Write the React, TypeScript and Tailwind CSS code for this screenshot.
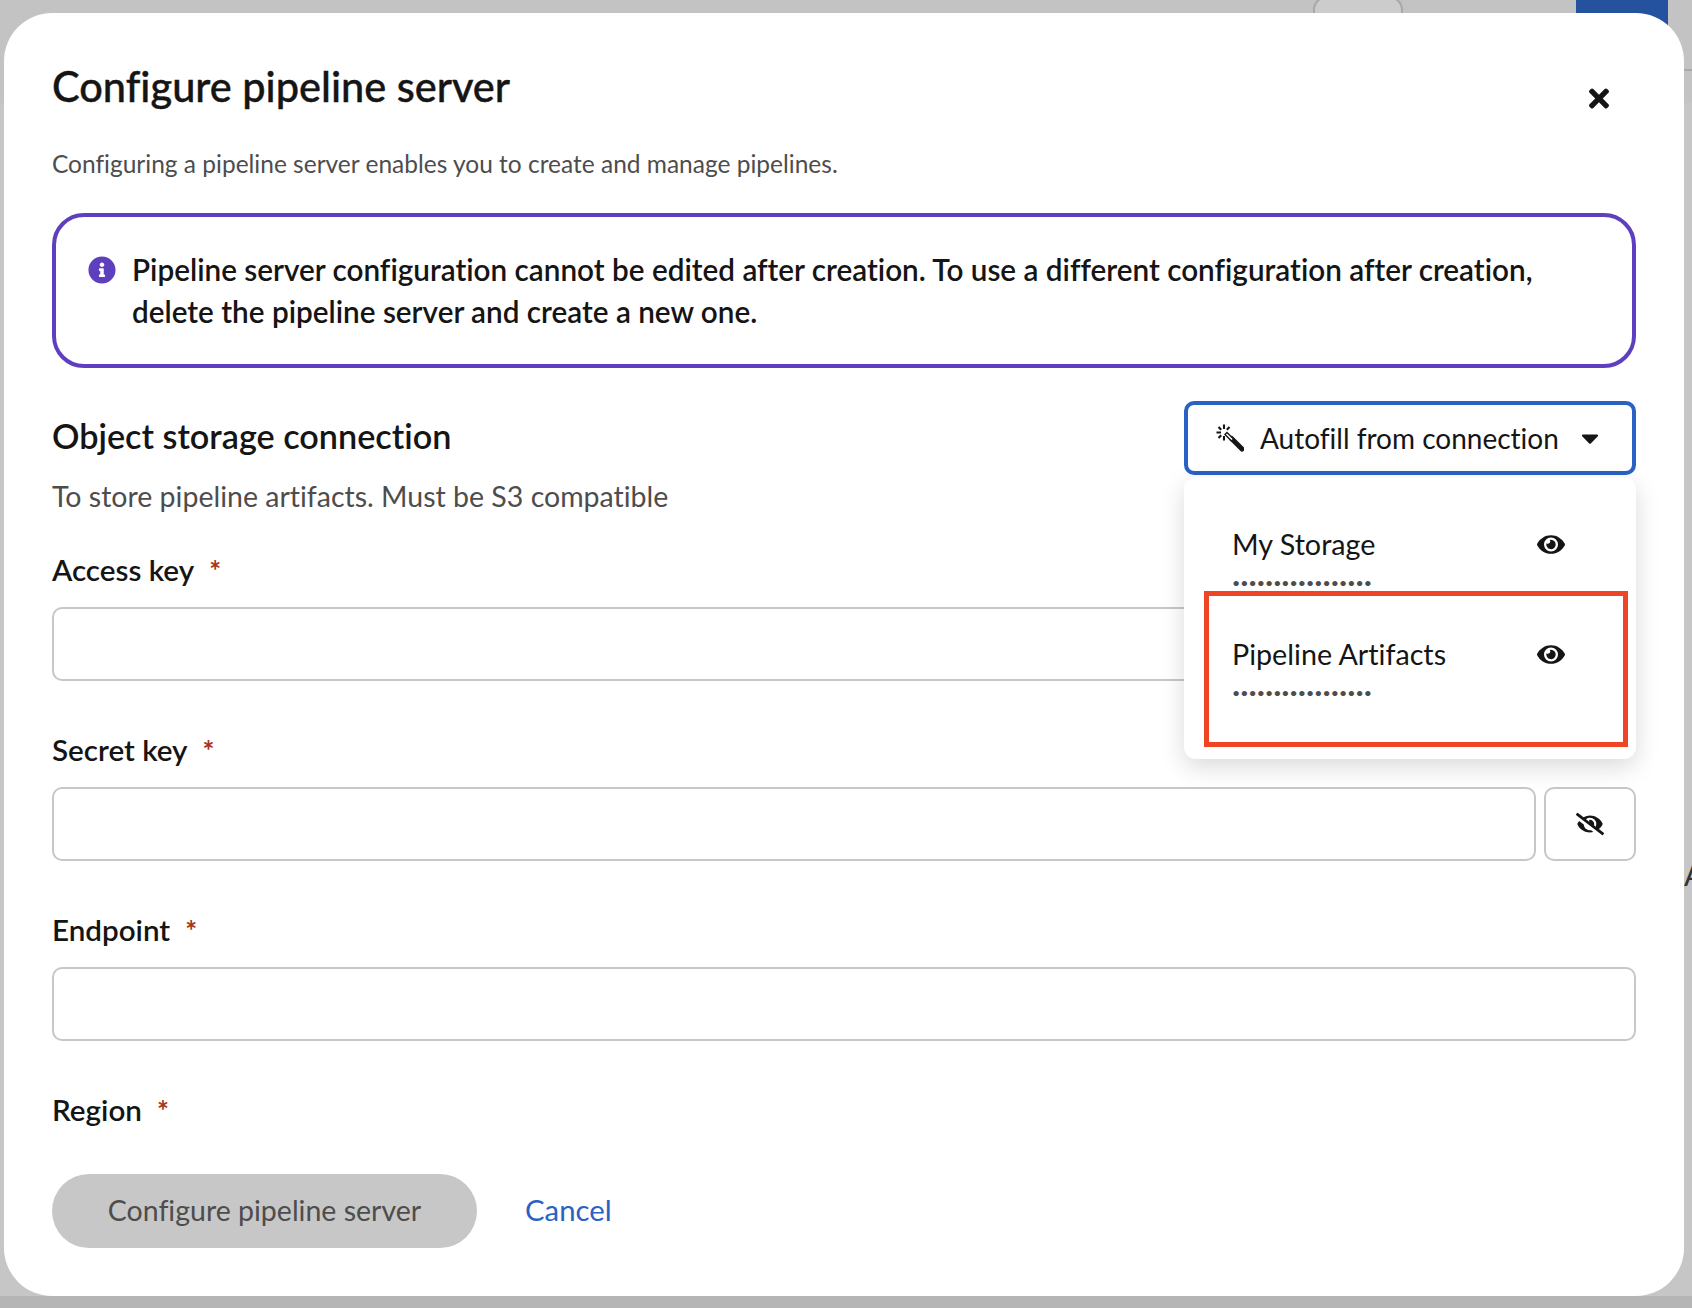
import { FaCaretDown, FaEye, FaEyeSlash, FaInfoCircle, FaTimes } from "react-icons/fa";

const Label = ({ text }: { text: string }) => (
  <div className="flex h-9 items-center text-[29.6px] font-semibold leading-9 text-[#151515]">
    <span>{text}</span>
    <span className="ml-[15px] text-[28px] font-bold text-[#a3361a]">*</span>
  </div>
);

const Input = ({ button = false }: { button?: boolean }) => (
  <div className="mt-[19px] flex h-[74px] gap-2">
    <div className="flex-1 rounded-[10px] border-2 border-[#c7c7c7] bg-white" />
    {button && (
      <button className="flex w-[92px] items-center justify-center rounded-[10px] border-2 border-[#c7c7c7] bg-white text-[#151515]">
        <FaEyeSlash className="h-[26px] w-[28px]" />
      </button>
    )}
  </div>
);

const MenuItem = ({ name }: { name: string }) => (
  <div className="h-[110px] pl-12 pr-[71px] pt-[19px]">
    <div className="flex h-9 items-center justify-between">
      <span className="text-[28.7px] leading-9 text-[#151515]">{name}</span>
      <FaEye className="h-[25px] w-[28px] text-[#151515]" />
    </div>
    <div className="mt-[5px] text-[14.2px] leading-8 text-[#4d4d4d]">•••••••••••••••••</div>
  </div>
);

// the wand with a burst at its tip, no icon in the packages has this shape
const Wand = () => (
  <svg viewBox="0 0 28 28" className="h-7 w-7 shrink-0" fill="none" stroke="#151515">
    <path d="M15.5 14.5 L26 25" strokeWidth="5" strokeLinecap="round" />
    <path d="M9 10.5 L11 8.5 L17.5 15 L15.5 17 Z" strokeWidth="1.4" fill="#ffffff" />
    <path d="M8 0.5 V5 M0.5 8.5 H5 M2.5 3 L5.2 5.7 M13.5 3 L10.8 5.7 M2.5 14 L5.2 11.3 M8 12 V16.5" strokeWidth="2.1" />
  </svg>
);

export default function App() {
  return (
    <div className="relative h-[1308px] w-[1692px] overflow-hidden bg-[#c6c6c6] font-['Lato',sans-serif] [font-variant-ligatures:none]">
      {/* dimmed page behind the modal */}
      <div className="absolute left-0 top-0 h-[103px] w-full bg-[#c3c3c3]" />
      <div className="absolute left-[1313px] top-[-4px] h-[60px] w-[90px] rounded-[14px] border-2 border-[#a8a8a8] bg-[#cccccc]" />
      <div className="absolute left-[1576px] top-0 h-[60px] w-[92px] bg-[#24529f]" />
      <div className="absolute left-[1684px] top-[69px] h-[2px] w-2 bg-[#a9a9a9]" />
      <div className="absolute bottom-0 left-0 h-3 w-full bg-[#b5b5b5]" />
      <div className="absolute left-[1684px] top-[856px] text-[30px] leading-9 text-[#333333]">A</div>

      <div className="absolute left-1 top-[13px] h-[1283px] w-[1680px] rounded-[48px] bg-white px-12 pt-12">
        <div className="flex items-start justify-between">
          <h1 className="pb-[2px] text-[41.5px] font-medium leading-[50px] text-[#151515] [-webkit-text-stroke:0.4px_#151515]">Configure pipeline server</h1>
          <FaTimes className="mr-[27px] mt-[23px] h-[29px] w-[20px] text-[#151515]" />
        </div>
        <p className="mt-[35px] text-[24.5px] leading-8 text-[#4d4d4d]">
          Configuring a pipeline server enables you to create and manage pipelines.
        </p>

        <div className="mt-[33px] flex h-[155px] gap-4 rounded-[32px] border-4 border-[#5e40be] pl-8 pt-8">
          <FaInfoCircle className="mt-[7px] h-7 w-7 shrink-0 text-[#5e40be]" />
          <p className="w-[1440px] text-[29.7px] font-semibold leading-[42px] text-[#151515]">
            Pipeline server configuration cannot be edited after creation. To use a different configuration after creation,
            <br />
            delete the pipeline server and create a new one.
          </p>
        </div>

        <div className="mt-[33px] flex h-[74px] items-center justify-between">
          <h2 className="pb-1 text-[34.2px] font-semibold leading-10 text-[#151515]">Object storage connection</h2>
          <div className="relative z-10 w-[452px]">
            <button className="flex h-[74px] w-full items-center rounded-[10px] border-4 border-[#2a62c4] bg-white pl-[28px] text-[#151515]">
              <Wand />
              <span className="ml-4 pb-[1px] text-[28px] leading-9">Autofill from connection</span>
              <FaCaretDown className="ml-[22px] h-[28px] w-[18px]" />
            </button>
            <div className="absolute left-0 top-[76px] h-[282px] w-full rounded-[12px] bg-white pt-[30px] shadow-[0_8px_24px_rgba(0,0,0,0.15)]">
              <MenuItem name="My Storage" />
              <MenuItem name="Pipeline Artifacts" />
              <div className="absolute left-5 top-[114px] h-[156px] w-[424px] border-[5px] border-[#ee4526]" />
            </div>
          </div>
        </div>
        <p className="mt-[1px] text-[28.5px] leading-10 text-[#4d4d4d]">To store pipeline artifacts. Must be S3 compatible</p>

        <div className="mt-9">
          <Label text="Access key" />
          <Input button />
        </div>
        <div className="mt-[51px]">
          <Label text="Secret key" />
          <Input button />
        </div>
        <div className="mt-[51px]">
          <Label text="Endpoint" />
          <Input />
        </div>
        <div className="mt-[51px]">
          <Label text="Region" />
        </div>

        <div className="mt-[46px] flex items-center">
          <button className="h-[74px] w-[425px] rounded-full bg-[#c7c7c7] pb-[2px] text-[28.5px] text-[#4d4d4d]">Configure pipeline server</button>
          <span className="ml-12 pb-[2px] text-[29.3px] text-[#2a62c4]">Cancel</span>
        </div>
      </div>
    </div>
  );
}
